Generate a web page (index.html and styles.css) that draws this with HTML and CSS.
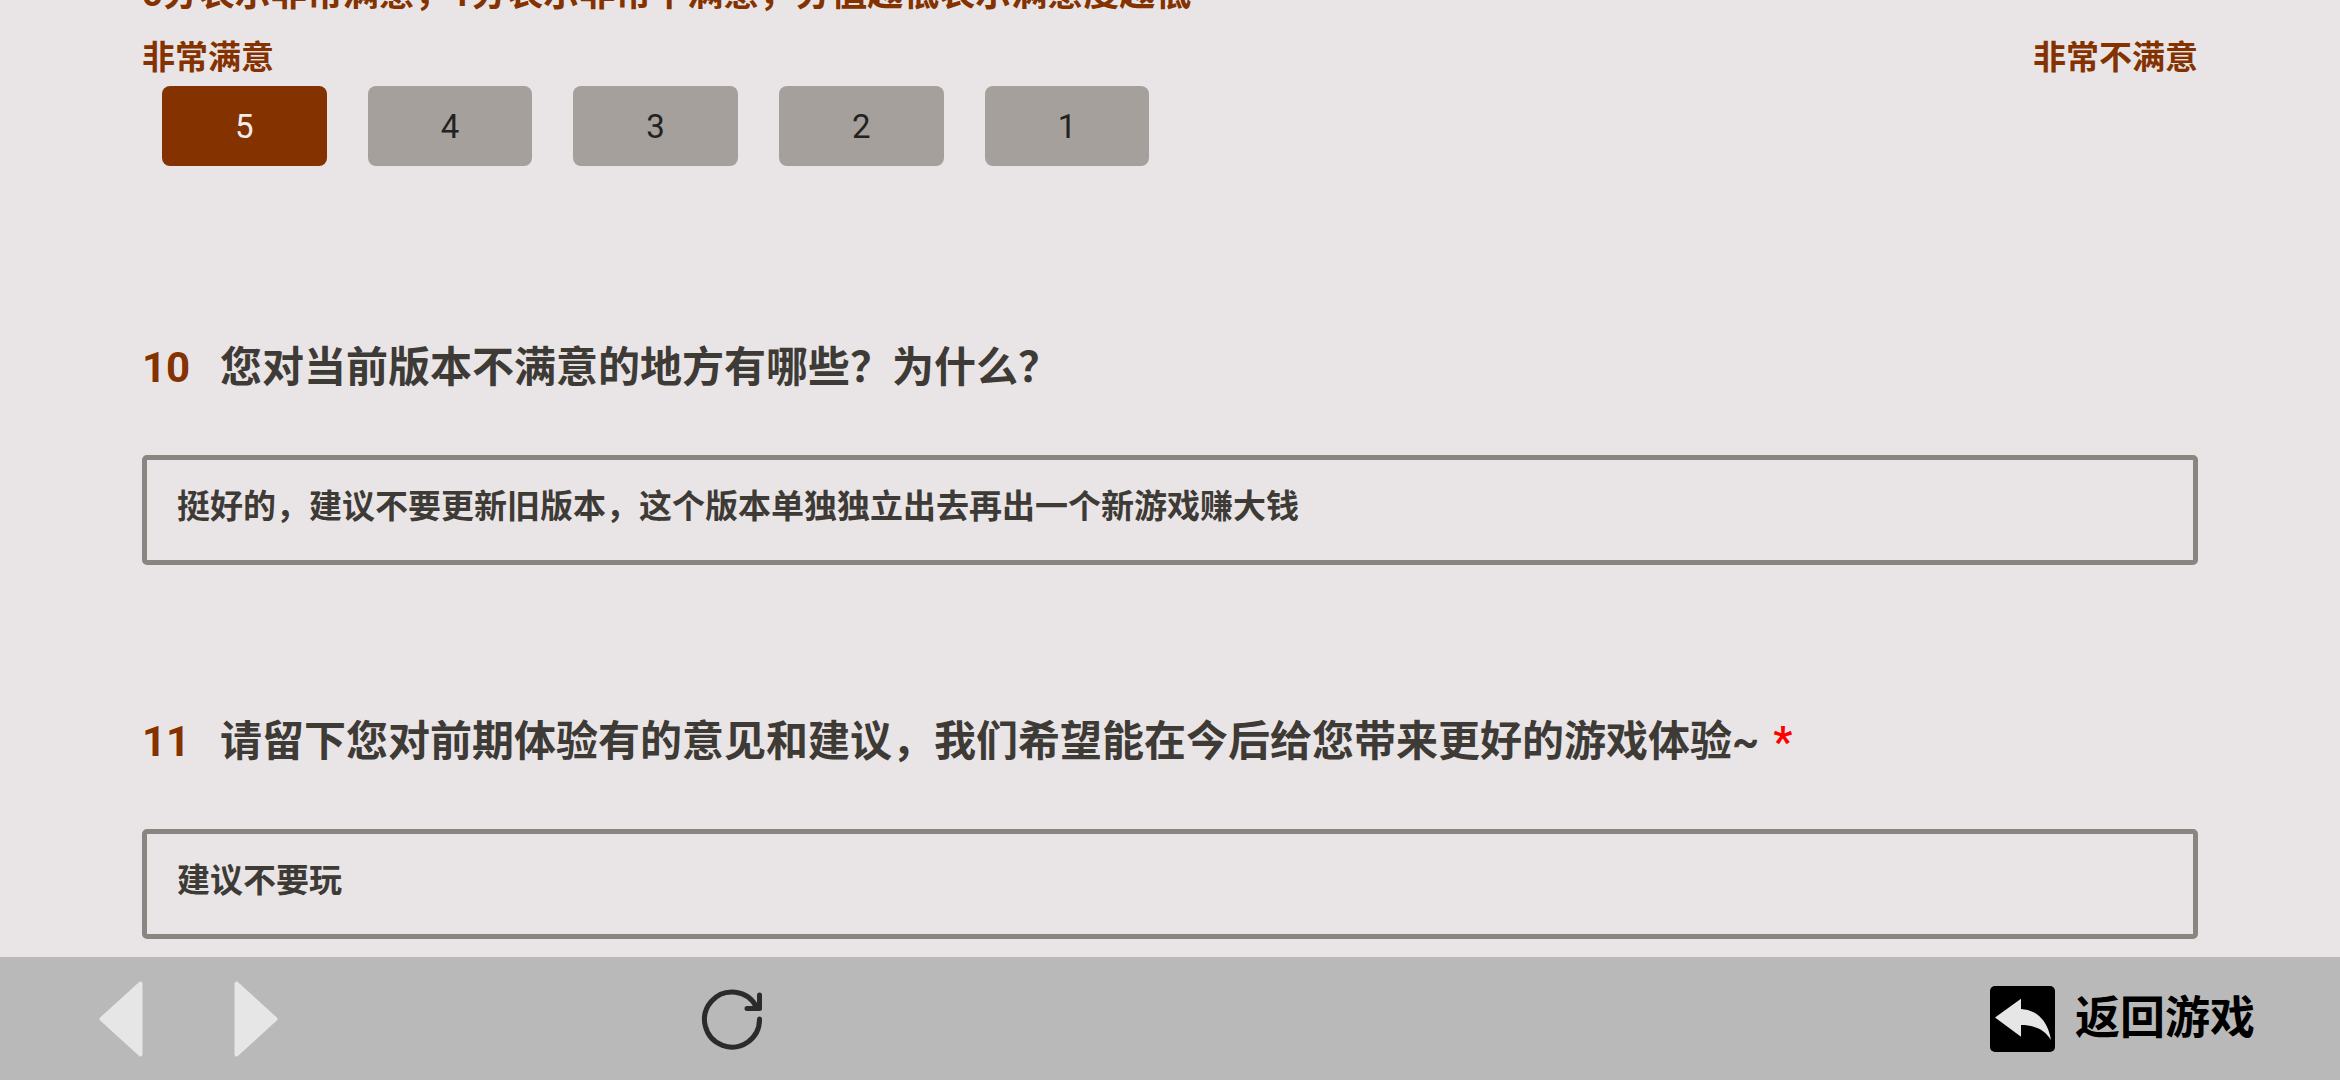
FILE: index.html
```html
<!DOCTYPE html>
<html lang="zh-CN">
<head>
<meta charset="utf-8">
<title>问卷</title>
<link rel="stylesheet" href="styles.css">
</head>
<body>
<main class="survey">
  <section class="rating">
    <p class="hint">5分表示非常满意，1分表示非常不满意，分值越低表示满意度越低</p>
    <div class="scale-labels"><span>非常满意</span><span>非常不满意</span></div>
    <div class="scale">
      <button class="score score-on">5</button>
      <button class="score">4</button>
      <button class="score">3</button>
      <button class="score">2</button>
      <button class="score">1</button>
    </div>
  </section>
  <section class="question">
    <h2 class="q-title"><span class="q-num">10</span><span>您对当前版本不满意的地方有哪些？为什么？</span></h2>
    <div class="answer">挺好的，建议不要更新旧版本，这个版本单独独立出去再出一个新游戏赚大钱</div>
  </section>
  <section class="question">
    <h2 class="q-title"><span class="q-num">11</span><span>请留下您对前期体验有的意见和建议，我们希望能在今后给您带来更好的游戏体验~</span><span class="req">*</span></h2>
    <div class="answer">建议不要玩</div>
  </section>
</main>
<footer class="bar">
  <svg class="nav-arrow" viewBox="0 0 44 76" aria-hidden="true"><path d="M41.5 2.5 V73.5 L2.5 38 Z" transform="translate(0 0)" class="arrow-shape"/></svg>
  <svg class="nav-arrow nav-next" viewBox="0 0 44 76" aria-hidden="true"><path d="M2.5 2.5 V73.5 L41.5 38 Z" class="arrow-shape"/></svg>
  <svg class="refresh" viewBox="0 0 62 62" aria-hidden="true"><path d="M58.5 31 A27.5 27.5 0 1 1 55.5 19 M58.5 7 V20.5 H46"/></svg>
  <div class="back">
    <svg class="back-icon" viewBox="0 0 65 66" aria-hidden="true"><rect width="65" height="66" rx="5" fill="#000"/><path d="M5 31.6 L31 12.7 V23 C48 24 58 36 61 54 C55 44 45 39 31 39 V50.7 Z" fill="#e6e6e6"/></svg>
    <span class="back-text">返回游戏</span>
  </div>
</footer>
</body>
</html>
```
FILE: styles.css
```css
* { box-sizing: border-box; }
html, body { margin: 0; height: 100%; }
body {
  width: 2340px;
  height: 1080px;
  overflow: hidden;
  display: flex;
  flex-direction: column;
  background: #e9e5e7;
  font-family: Roboto, "Noto Sans CJK SC", sans-serif;
  color: #3e3a35;
}
.survey {
  flex: 1;
  min-height: 0;
  overflow: hidden;
  padding: 0 142px;
}
.hint {
  margin: -31px 0 0;
  font-size: 36px;
  line-height: 50px;
  font-weight: 700;
  color: #843200;
}
.scale-labels {
  display: flex;
  justify-content: space-between;
  margin-top: 17px;
  font-size: 33px;
  line-height: 44px;
  font-weight: 700;
  color: #843200;
}
.scale {
  display: flex;
  gap: 41.2px;
  margin-top: 6px;
  padding-left: 20px;
}
.score {
  width: 164.5px;
  height: 80px;
  border: 0;
  border-radius: 8px;
  padding: 0;
  background: #a5a09b;
  color: #222;
  font-family: Roboto, sans-serif;
  font-size: 33px;
}
.score-on {
  background: #843200;
  color: #f2eeee;
}
.rating { margin-bottom: 172px; }
.question { margin-bottom: 147px; }
.q-title {
  display: flex;
  margin: 0 0 57px;
  font-size: 42px;
  line-height: 60px;
  font-weight: 700;
}
.q-num {
  width: 78px;
  color: #843200;
}
.req {
  margin-left: 14px;
  color: #f00;
}
.answer {
  height: 110px;
  padding-left: 30px;
  border: 5px solid #8a8580;
  border-radius: 5px;
  font-size: 33px;
  line-height: 94px;
  font-weight: 700;
}
.bar {
  flex: none;
  height: 123px;
  display: flex;
  align-items: center;
  padding: 0 85px 0 99px;
  background: #b9b9b9;
}
.nav-arrow { width: 44px; height: 76px; }
.arrow-shape {
  fill: #e6e6e6;
  stroke: #e6e6e6;
  stroke-width: 4;
  stroke-linejoin: round;
}
.nav-next { margin-left: 91px; }
.refresh {
  width: 62px;
  height: 62px;
  margin-left: 423px;
  fill: none;
  stroke: #2b2b2b;
  stroke-width: 5;
  stroke-linecap: round;
  stroke-linejoin: round;
}
.back {
  display: flex;
  align-items: center;
  gap: 20px;
  margin-left: auto;
}
.back-icon { width: 65px; height: 66px; }
.back-text {
  font-size: 45px;
  line-height: 66px;
  font-weight: 700;
  color: #000;
}
```
